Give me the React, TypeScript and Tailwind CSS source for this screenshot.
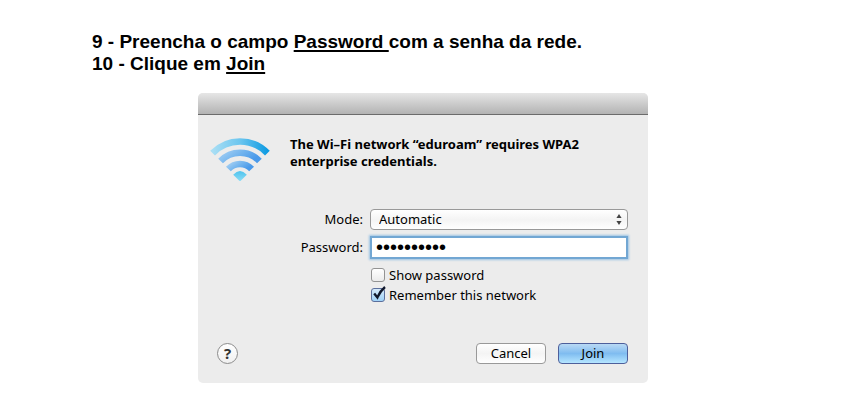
import React, { useState } from 'react'

const WifiIcon: React.FC = () => (
  <svg width="60" height="46" viewBox="0 0 60 46" fill="none" aria-hidden="true">
    <defs>
      <linearGradient id="outer" x1="0" y1="0" x2="1" y2="0">
        <stop offset="0" stopColor="#a9def4" />
        <stop offset="0.5" stopColor="#6cc6ef" />
        <stop offset="1" stopColor="#0f9be2" />
      </linearGradient>
      <linearGradient id="inner" x1="0" y1="0" x2="1" y2="0.3">
        <stop offset="0" stopColor="#a0cdf3" />
        <stop offset="0.5" stopColor="#72b4ee" />
        <stop offset="1" stopColor="#4a9aea" />
      </linearGradient>
      <linearGradient id="tip" x1="0" y1="0" x2="0" y2="1">
        <stop offset="0" stopColor="#4fc3ee" />
        <stop offset="1" stopColor="#8adcf6" />
      </linearGradient>
    </defs>
    <path d="M2.6 17.1A38 38 0 0 1 57.4 17.1" stroke="url(#outer)" strokeWidth="6.6" />
    <path d="M10.6 25A27 27 0 0 1 49.4 25" stroke="url(#inner)" strokeWidth="6.6" />
    <path d="M18.4 33A15.8 15.8 0 0 1 41.6 33" stroke="url(#inner)" strokeWidth="6.6" />
    <path d="M23.2 38.8Q30 31.4 36.8 38.8L30.7 44.8Q30 45.4 29.3 44.8Z" fill="url(#tip)" />
  </svg>
)

interface CheckProps {
  label: string
  checked: boolean
  onChange: (value: boolean) => void
}

const Check: React.FC<CheckProps> = ({ label, checked, onChange }) => (
  <label className="flex h-5 items-center gap-1">
    <span className="relative h-3.5 w-3.5">
      <input
        type="checkbox"
        checked={checked}
        onChange={(e) => onChange(e.target.checked)}
        className="block h-3.5 w-3.5 appearance-none rounded-[3px] border border-[#939393] bg-gradient-to-b from-white to-[#ececec] checked:border-[#5b6f9c] checked:from-[#d5e9fa] checked:to-[#9fd2f8]"
      />
      {checked && (
        <svg
          className="pointer-events-none absolute -top-0.5 left-0"
          width="16"
          height="16"
          viewBox="0 0 16 16"
          fill="none"
          aria-hidden="true"
        >
          <path d="M3.2 7.6L6.4 11.4Q9 5.2 14 1" stroke="#10182c" strokeWidth="2.4" />
        </svg>
      )}
    </span>
    {label}
  </label>
)

const App: React.FC = () => {
  const [password, setPassword] = useState('eduroam123')
  const [show, setShow] = useState(false)
  const [remember, setRemember] = useState(true)

  return (
    <div className="min-h-screen bg-white pt-[31px] pl-0.5 text-black">
      <div className="pl-[90px] font-['Liberation_Sans',Arial,sans-serif] text-[19px] leading-[22px] font-bold">
        <p>
          9 - Preencha o campo <span className="underline decoration-2 underline-offset-2">Password </span>com a senha da rede.
        </p>
        <p>
          10 - Clique em <span className="underline decoration-2 underline-offset-2">Join</span>
        </p>
      </div>

      <div className="mx-auto mt-[18px] w-full max-w-[450px] rounded-[5px] bg-[#ececec] font-['Noto_Sans','Open_Sans',sans-serif] text-[13px] leading-[17px]">
        <div className="h-[22px] rounded-t-[5px] border-b border-[#6b6b6b] bg-gradient-to-b from-[#e6e6e6] to-[#b3b3b3]" />

        <form className="px-5 pb-[19px]" onSubmit={(e) => e.preventDefault()}>
          <div className="-ml-2 flex gap-5 pt-[21px]">
            <WifiIcon />
            <p className="max-w-[320px] font-bold">
              The Wi–Fi network “eduroam” requires WPA2 enterprise credentials.
            </p>
          </div>

          <div className="mt-[27px] grid grid-cols-[145px_1fr] items-center gap-x-[7px] gap-y-1.5">
            <label htmlFor="mode" className="text-right">Mode:</label>
            <div className="relative">
              <select
                id="mode"
                className="block h-[21px] w-full appearance-none rounded-[4px] border border-[#999] bg-gradient-to-b from-white via-[#f4f4f4] to-white px-2"
              >
                <option>Automatic</option>
              </select>
              <svg
                className="pointer-events-none absolute top-1 right-1.5"
                width="6"
                height="13"
                viewBox="0 0 6 13"
                fill="#444"
                aria-hidden="true"
              >
                <path d="M3 1L5.6 5H0.4ZM3 12L0.4 8H5.6Z" />
              </svg>
            </div>

            <label htmlFor="password" className="text-right">Password:</label>
            <input
              id="password"
              type={show ? 'text' : 'password'}
              value={password}
              onChange={(e) => setPassword(e.target.value)}
              className={`block h-[23px] w-full border-2 border-[#72a7d3] bg-white px-1 shadow-[0_0_2px_1px_#9cc3e4] outline-none ${show ? 'text-[13px]' : "font-['Liberation_Sans',sans-serif] text-[20px]"}`}
            />

            <div className="col-start-2 pl-px">
              <Check label="Show password" checked={show} onChange={setShow} />
              <Check label="Remember this network" checked={remember} onChange={setRemember} />
            </div>
          </div>

          <div className="mt-[38px] flex items-center gap-3">
            <button
              type="button"
              aria-label="Help"
              className="mr-auto -ml-px h-[21px] w-[21px] rounded-full border border-[#8c8c8c] bg-gradient-to-b from-white to-[#f0f0f0] text-[15px] font-bold text-[#333]"
            >
              ?
            </button>
            <button
              type="button"
              className="h-[21px] w-[70px] rounded-[4px] border border-[#999] bg-gradient-to-b from-white via-[#f4f4f4] to-white"
            >
              Cancel
            </button>
            <button
              type="submit"
              className="h-[21px] w-[70px] rounded-[4px] border border-[#4d5f9b] bg-gradient-to-b from-[#b9d9f4] via-[#7fbcf0] to-[#b5e6ff]"
            >
              Join
            </button>
          </div>
        </form>
      </div>
    </div>
  )
}

export default App
